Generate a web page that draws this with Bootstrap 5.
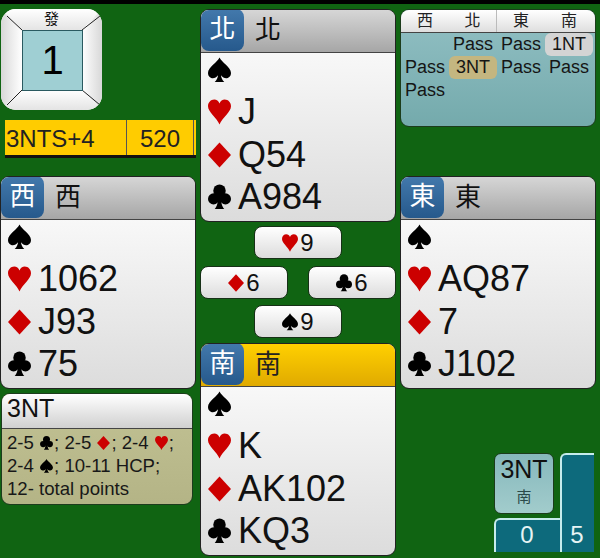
<!DOCTYPE html>
<html lang="zh-Hant">
<head>
<meta charset="utf-8">
<title>Bridge</title>
<link href="https://cdn.jsdelivr.net/npm/bootstrap@5.3.0/dist/css/bootstrap.min.css" rel="stylesheet">
<style>
html,body{height:558px;overflow:hidden}
body{background:#106412;color:#111;font-family:"Liberation Sans","Noto Sans CJK TC",sans-serif;border-top:4px solid #000;}
.tbl{display:grid;grid-template-columns:196px 196px 196px;column-gap:4px;padding-top:5px;height:554px}
.rs{fill:#c00}
.bd{fill:#000}
.seat{width:196px;height:213px;background:linear-gradient(#fff,#dcdcdc);border:1px solid #222;border-radius:9px;overflow:hidden;--bs-card-bg:transparent;flex:none}
.seat-head{height:43px;border-bottom:1px solid #444;background:linear-gradient(#d6d6d6,#a6a6a6);font-size:26px;line-height:41px;flex:none;margin-bottom:-4px}
.seat-head.act{background:linear-gradient(#ffd000,#e0aa00);color:#222}
.seat-badge{width:43px;height:42px;border-radius:8px;background:linear-gradient(#4379ac,#26598c);color:#fff;text-align:center;margin:-1px 11px 0 0}
.hrow{height:42.4px;line-height:42.4px;font-size:36px;padding-left:7px;white-space:nowrap}
.hrow svg{width:23px;height:26px;margin-right:7px;vertical-align:-1px}
.board{width:101px;height:101px;margin-left:1px;background:#fff;border-radius:15px;position:relative;overflow:hidden;flex:none}
.board>svg{position:absolute;inset:0}
.board-dir{position:absolute;top:0;left:0;right:0;text-align:center;font-size:15px;line-height:20px}
.board-num{position:absolute;left:21px;top:21px;width:61px;height:61px;text-align:center;font-size:40px;line-height:60px;color:#000}
.contract{margin:10px 0 18px 5px;height:38px;background:#fc0;border-bottom:3px solid #111;font-size:24px;line-height:38px;color:#222;flex:none}
.contract-a{width:122px;border-right:1px solid #555;padding-left:1px}
.contract-b{width:67px;border-right:1px solid #555;text-align:center}
.expl{margin-top:4px;width:192px;margin-left:1px;height:112px;border:1px solid #1d3c1d;border-radius:9px;overflow:hidden;background:linear-gradient(#c2c294,#b4b486);--bs-card-bg:transparent}
.expl-head{height:35px;background:linear-gradient(#fff,#d0d0d0);border-bottom:1px solid #444;font-size:25px;line-height:29px;padding-left:5px;flex:none}
.expl-body{font-size:18.6px;line-height:23px;padding:2px 5px 0;white-space:nowrap;color:#181818}
.expl-body svg{width:13px;height:14px;vertical-align:-1px;margin:0 1px}
.play{width:88px;height:33px;background:linear-gradient(#fff,#dcdcdc);border:1px solid #173017;border-radius:8px;font-size:24px;line-height:31px;text-align:center}
.play svg{width:16px;height:18px;vertical-align:-1px;margin-right:2px}
.tricks{height:112px;margin:4px 0 5px;flex:none}
.auction{height:118px;border:1px solid #1c3c1c;border-radius:9px;overflow:hidden;background:linear-gradient(#92c0c4,#74aaac);margin-bottom:49px;flex:none;font-size:18px}
.agrid{display:grid;grid-template-columns:repeat(4,48px);text-align:center}
.ahead{height:23px;background:linear-gradient(#fff,#dedede);border-bottom:1px solid #444;font-size:16px;line-height:22px;color:#222;flex:none}
.ahead div:nth-child(2){border-right:1px solid #bbb}
.abody{padding:0;line-height:23px;color:#151515}
.abid{border-radius:6px}
.a-g{background:#d4d4d4}
.a-y{background:#c4b680}
.score{margin-top:64px;margin-left:94px;display:grid;grid-template-columns:66px 34px;grid-template-rows:65px 34px;width:100px}
.score-c{width:60px;height:61px;border:1px solid #1c3c1c;border-radius:7px;background:linear-gradient(#86b8bc,#a2cccc);text-align:center;font-size:25px;line-height:27px;padding-top:2px}
.score-c small{display:block;font-size:15px;line-height:27px;color:#2a4a4a}
.score-ns,.score-ew{background:#0d6a7c;color:#e6f4f4;font-size:24px;border-top:2px solid #c6ecec;border-left:2px solid #c6ecec;border-radius:6px 0 0 0;text-align:center}
.score-ns{line-height:30px;grid-row:2;padding-right:2px}
.score-ew{grid-column:2;grid-row:1/span 2;display:flex;align-items:flex-end;justify-content:center;line-height:34px;padding-right:2px}
</style>
</head>
<body>
<svg class="d-none" aria-hidden="true">
  <symbol id="sp" viewBox="0 0 24 26"><path d="M12 0C14 5 24 10 24 16C24 20 21 21.5 19 21.5C17 21.5 15 20.5 13.5 18.5C13.8 21 14.8 23.5 17 25.5H7C9.2 23.5 10.2 21 10.5 18.5C9 20.5 7 21.5 5 21.5C3 21.5 0 20 0 16C0 10 10 5 12 0Z"/></symbol>
  <symbol id="he" viewBox="0 0 24 26"><path d="M12 26C9 19 0 13 0 7C0 3 3 0 6.5 0C9 0 11 1.5 12 4C13 1.5 15 0 17.5 0C21 0 24 3 24 7C24 13 15 19 12 26Z"/></symbol>
  <symbol id="di" viewBox="0 0 24 26"><path d="M12 0L24 13L12 26L0 13Z"/></symbol>
  <symbol id="cl" viewBox="0 0 24 26"><circle cx="12" cy="6.5" r="6.5"/><circle cx="5.8" cy="15" r="5.8"/><circle cx="18.2" cy="15" r="5.8"/><path d="M10.5 11C10.5 19 9.5 23 7 25.5H17C14.5 23 13.5 19 13.5 11Z"/></symbol>
</svg>
<div class="tbl">
  <div class="d-flex flex-column">
    <div class="board">
      <svg width="101" height="101" viewBox="0 0 101 101" aria-hidden="true">
        <defs>
          <linearGradient id="gv" x1="0" y1="0" x2="0" y2="1"><stop offset="0" stop-color="#fff"/><stop offset="1" stop-color="#e4e4e4"/></linearGradient>
          <linearGradient id="gl" x1="0" y1="0" x2="1" y2="0"><stop offset="0" stop-color="#d8d8d8"/><stop offset="1" stop-color="#fff"/></linearGradient>
          <linearGradient id="gr" x1="0" y1="0" x2="1" y2="0"><stop offset="0" stop-color="#fff"/><stop offset="1" stop-color="#d8d8d8"/></linearGradient>
        </defs>
        <polygon points="0,0 101,0 81,21 21,21" fill="url(#gv)"/>
        <polygon points="0,0 21,21 21,81 0,101" fill="url(#gl)"/>
        <polygon points="101,0 81,21 81,81 101,101" fill="url(#gr)"/>
        <polygon points="0,101 21,81 81,81 101,101" fill="url(#gv)"/>
        <path d="M6 7 21 21M99 7 81 21M6 96 21 81M99 96 81 81" stroke="#222" stroke-width="1" fill="none"/>
        <rect x="21.5" y="21.5" width="60" height="60" fill="#9fcfd3" stroke="#2a5a60"/>
      </svg>
      <div class="board-dir">發</div>
      <div class="board-num">1</div>
    </div>
    <div class="contract d-flex">
      <div class="contract-a">3NTS+4</div>
      <div class="contract-b">520</div>
    </div>
    <div class="card seat">
      <div class="seat-head d-flex"><div class="seat-badge">西</div><div>西</div></div>
      <div class="hrow"><svg class="bd"><use href="#sp"/></svg></div>
      <div class="hrow"><svg class="rs"><use href="#he"/></svg>1062</div>
      <div class="hrow"><svg class="rs"><use href="#di"/></svg>J93</div>
      <div class="hrow"><svg class="bd"><use href="#cl"/></svg>75</div>
    </div>
    <div class="card expl">
      <div class="expl-head">3NT</div>
      <div class="expl-body">2-5 <svg class="bd"><use href="#cl"/></svg>; 2-5 <svg class="rs"><use href="#di"/></svg>; 2-4 <svg class="rs"><use href="#he"/></svg>;<br>2-4 <svg class="bd"><use href="#sp"/></svg>; 10-11 HCP;<br>12- total points</div>
    </div>
  </div>
  <div class="d-flex flex-column">
    <div class="card seat">
      <div class="seat-head d-flex"><div class="seat-badge">北</div><div>北</div></div>
      <div class="hrow"><svg class="bd"><use href="#sp"/></svg></div>
      <div class="hrow"><svg class="rs"><use href="#he"/></svg>J</div>
      <div class="hrow"><svg class="rs"><use href="#di"/></svg>Q54</div>
      <div class="hrow"><svg class="bd"><use href="#cl"/></svg>A984</div>
    </div>
    <div class="tricks d-flex flex-column justify-content-between">
      <div class="play align-self-center"><svg class="rs"><use href="#he"/></svg>9</div>
      <div class="d-flex justify-content-between">
        <div class="play"><svg class="rs"><use href="#di"/></svg>6</div>
        <div class="play"><svg class="bd"><use href="#cl"/></svg>6</div>
      </div>
      <div class="play align-self-center"><svg class="bd"><use href="#sp"/></svg>9</div>
    </div>
    <div class="card seat">
      <div class="seat-head act d-flex"><div class="seat-badge">南</div><div>南</div></div>
      <div class="hrow"><svg class="bd"><use href="#sp"/></svg></div>
      <div class="hrow"><svg class="rs"><use href="#he"/></svg>K</div>
      <div class="hrow"><svg class="rs"><use href="#di"/></svg>AK102</div>
      <div class="hrow"><svg class="bd"><use href="#cl"/></svg>KQ3</div>
    </div>
  </div>
  <div class="d-flex flex-column">
    <div class="auction d-flex flex-column">
      <div class="ahead agrid"><div>西</div><div>北</div><div>東</div><div>南</div></div>
      <div class="abody agrid">
        <div></div><div>Pass</div><div>Pass</div><div class="abid a-g">1NT</div>
        <div>Pass</div><div class="abid a-y">3NT</div><div>Pass</div><div>Pass</div>
        <div>Pass</div>
      </div>
    </div>
    <div class="card seat">
      <div class="seat-head d-flex"><div class="seat-badge">東</div><div>東</div></div>
      <div class="hrow"><svg class="bd"><use href="#sp"/></svg></div>
      <div class="hrow"><svg class="rs"><use href="#he"/></svg>AQ87</div>
      <div class="hrow"><svg class="rs"><use href="#di"/></svg>7</div>
      <div class="hrow"><svg class="bd"><use href="#cl"/></svg>J102</div>
    </div>
    <div class="score">
      <div class="score-c">3NT<small>南</small></div>
      <div class="score-ns">0</div>
      <div class="score-ew">5</div>
    </div>
  </div>
</div>
<script src="https://cdn.jsdelivr.net/npm/bootstrap@5.3.0/dist/js/bootstrap.bundle.min.js"></script>
</body>
</html>
